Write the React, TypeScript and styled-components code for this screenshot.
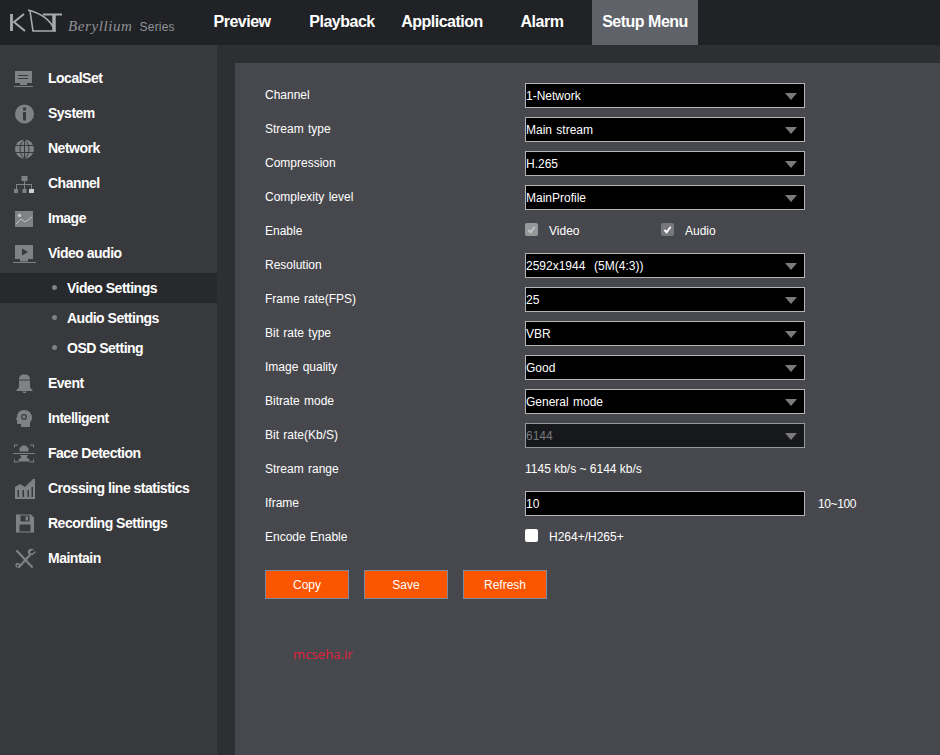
import React from 'react';
import styled, { createGlobalStyle } from 'styled-components';

const GlobalStyle = createGlobalStyle`
  html, body {
    margin: 0;
    height: 100%;
    overflow: hidden;
    background: #2e2f33;
    font-family: 'Liberation Sans', Arial, sans-serif;
  }
  * { box-sizing: border-box; }
`;

const Page = styled.div`
  width: 940px;
  height: 755px;
  display: flex;
  flex-direction: column;
  overflow: hidden;
`;

const Header = styled.header`
  height: 45px;
  flex: none;
  display: flex;
  background: #212226;
`;

const Logo = styled.div`
  width: 192px;
  padding: 8px 0 0 10px;
  display: flex;
  align-items: flex-start;
`;

const LogoScript = styled.span`
  margin: 10px 0 0 6px;
  font: italic 15px 'Liberation Serif', serif;
  letter-spacing: 0.6px;
  color: #8f9296;
  white-space: nowrap;
`;

const LogoSeries = styled.span`
  margin: 12px 0 0 7px;
  font-size: 12px;
  letter-spacing: 0.2px;
  color: #8f9296;
`;

const NavItem = styled.div<{ $active?: boolean }>`
  width: ${({ $active }) => ($active ? 106 : 100)}px;
  display: flex;
  align-items: center;
  justify-content: center;
  padding-bottom: 2px;
  font-size: 16px;
  font-weight: bold;
  letter-spacing: -0.5px;
  color: #fff;
  background: ${({ $active }) => ($active ? '#5f6369' : 'transparent')};
`;

const Body = styled.div`
  flex: 1;
  display: flex;
  min-height: 0;
`;

const Sidebar = styled.nav`
  width: 217px;
  flex: none;
  padding-top: 15px;
  background: #38393d;
`;

const MenuRow = styled.div`
  height: 35px;
  display: flex;
  align-items: center;
  padding-left: 13px;
  font-size: 14px;
  font-weight: bold;
  letter-spacing: -0.5px;
  color: #fff;
`;

const MenuIcon = styled.svg`
  width: 24px;
  height: 24px;
  flex: none;
  margin-right: 11px;
  fill: #808184;
`;

const SubList = styled.div`
  margin: 3px 0 2px;
`;

const SubRow = styled.div<{ $active?: boolean }>`
  height: 30px;
  display: flex;
  align-items: center;
  padding: 0 0 1px 52px;
  font-size: 14px;
  font-weight: bold;
  letter-spacing: -0.5px;
  color: #fff;
  background: ${({ $active }) => ($active ? '#28292d' : 'transparent')};
`;

const SubDot = styled.span`
  width: 5px;
  height: 5px;
  margin-right: 10px;
  border-radius: 50%;
  background: #808184;
`;

const Content = styled.main`
  flex: 1;
  margin: 18px 0 0 18px;
  padding: 16px 0 0 30px;
  background: #47484d;
`;

const FormRow = styled.div`
  height: 34px;
  display: flex;
  align-items: center;
  font-size: 12px;
  word-spacing: 1px;
  color: #fff;
`;

const Label = styled.div`
  width: 260px;
  flex: none;
  padding-bottom: 3px;
`;

const Select = styled.div<{ $disabled?: boolean }>`
  width: 280px;
  height: 25px;
  margin-bottom: 1px;
  display: flex;
  align-items: center;
  justify-content: space-between;
  padding: 0 7px 0 0;
  border: 1px solid ${({ $disabled }) => ($disabled ? '#98999b' : '#b4b4b4')};
  background: ${({ $disabled }) => ($disabled ? '#17181b' : '#000')};
  color: ${({ $disabled }) => ($disabled ? '#77787c' : '#fff')};
`;

const Arrow = styled.span`
  width: 0;
  height: 0;
  margin-top: 1px;
  border-left: 6px solid transparent;
  border-right: 6px solid transparent;
  border-top: 7px solid #7a7a7a;
`;

const TextInput = styled.div`
  width: 280px;
  height: 25px;
  margin-bottom: 1px;
  display: flex;
  align-items: center;
  border: 1px solid #b4b4b4;
  background: #000;
`;

const Hint = styled.span`
  margin-left: 13px;
  letter-spacing: -0.4px;
`;

const RangeText = styled.span`
  padding-bottom: 2px;
  word-spacing: 0;
`;

const CheckGroup = styled.div<{ $width?: number }>`
  width: ${({ $width }) => ($width ? `${$width}px` : 'auto')};
  padding-bottom: 2px;
  display: flex;
  align-items: center;
`;

const CheckBox = styled.span<{ $tone: 'dim' | 'on' | 'off' }>`
  width: 13px;
  height: 13px;
  flex: none;
  margin: -3px 11px 0 0;
  display: flex;
  align-items: center;
  justify-content: center;
  border-radius: 2px;
  background: ${({ $tone }) =>
    $tone === 'dim' ? '#97989a' : $tone === 'on' ? '#77787b' : '#fff'};
  svg {
    width: 11px;
    height: 11px;
    stroke: ${({ $tone }) => ($tone === 'dim' ? '#c4c5c6' : '#fff')};
  }
`;

const Buttons = styled.div`
  display: flex;
  gap: 15px;
  margin-top: 15px;
`;

const Button = styled.button`
  width: 84px;
  height: 29px;
  padding: 0;
  border: 1px solid #7d8ba0;
  background: #fb5500;
  color: #fff;
  font: 12px 'Liberation Sans', Arial, sans-serif;
`;

const Watermark = styled.div`
  margin: 46px 0 0 28px;
  font: 13px 'Open Sans', sans-serif;
  letter-spacing: 0.1px;
  color: #e0203a;
`;

const icons: Record<string, React.ReactNode> = {
  local: (
    <g transform="translate(0 2)">
      <path fillRule="evenodd" d="M2 3h17v12H2zM5 7h10v1H5zM5 10h10v1H5z" />
      <path d="M7 15h7v2H7zM1 18h19v1H1z" />
    </g>
  ),
  system: (
    <path
      transform="translate(0 1.500)"
      fillRule="evenodd"
      d="M11.500 2a9.500 9.500 0 1 0 0 19 9.500 9.500 0 0 0 0-19zM10 5h3v3h-3zM10 9.500h3V18h-3z"
    />
  ),
  network: (
    <g transform="translate(0 1.500)">
      <circle cx="11.500" cy="11.500" r="9.500" />
      <path
        d="M2 8h19M2 15h19M11.500 2v19M11.500 2c-6 5-6 14 0 19M11.500 2c6 5 6 14 0 19"
        fill="none"
        stroke="#38393d"
        strokeWidth="1"
      />
    </g>
  ),
  channel: (
    <g transform="translate(0 3)">
      <path d="M8.500 2h6v5h-6zM1 15h4v4H1zM9.500 15h4v4h-4z" />
      <path d="M16 15h5v4h-5z" fill="#cfcfd0" />
      <path d="M11 7h1v3h7v5h-1v-4h-6v4h-1v-4H4v4H3v-5h8z" />
    </g>
  ),
  image: (
    <g transform="translate(0 3)">
      <path fillRule="evenodd" d="M2 2h18v16H2z" />
      <circle cx="6.500" cy="6.500" r="1.800" fill="#c4c4c5" />
      <path d="M3 15l5-5 4 3 7-5" fill="none" stroke="#c4c4c5" strokeWidth="1" />
    </g>
  ),
  video: (
    <g transform="translate(0 3)">
      <path fillRule="evenodd" d="M2 1h18v14H2zM9 4.500v7l6-3.500z" />
      <path d="M7 15h8v2.500H7zM0 18h23v1H0z" />
    </g>
  ),
  event: (
    <path
      transform="translate(0 1.500)"
      d="M11.500 2c4 0 5.500 2 5.500 5H6c0-3 1.500-5 5.500-5zM6 8h11v6c0 1.500 1.500 2.500 2.500 3.500v1h-16v-1C4.500 16.500 6 15.500 6 14zM9.500 19h4c0 1.500-1 1.500-2 1.500s-2 0-2-1.500z"
    />
  ),
  intelligent: (
    <g>
      <path d="M11 4c4.500 0 8 3 8 7.500 0 2.500-1.500 4-2 5.500v4H8v-3H5.500c-1 0-1.500-.5-1.500-1.500V14l-1-1 1-2C4 7 7 4 11 4z" />
      <circle cx="11" cy="11" r="2.300" fill="none" stroke="#38393d" strokeWidth="1.200" />
    </g>
  ),
  face: (
    <g transform="translate(0 1.500)">
      <path d="M1 2h4v1H2v2H1zM17 2h4v3h-1V3h-3zM1 17h1v2h3v1H1zM20 17h1v3h-4v-1h3z" />
      <path d="M11 3a4.500 4.500 0 0 1 4.500 4.500V9h-9V7.500A4.500 4.500 0 0 1 11 3zM0 10.500h22v1H0zM7 12.500h8c-.3 1-1 2-2 2.500 2.500.3 3.500 2 4 4H5c.5-2 1.500-3.700 4-4-1-.5-1.700-1.500-2-2.500z" />
    </g>
  ),
  crossing: (
    <path
      transform="translate(0 1)"
      fillRule="evenodd"
      d="M2 10l5-3 5 3 8-8h2v20H2zM4.500 13v7H6v-7zM9.500 13v7H11v-7zM14.500 13v7H16v-7zM18.500 10v10H20V10z"
    />
  ),
  recording: (
    <path
      transform="translate(0 1.500)"
      fillRule="evenodd"
      d="M3 2h15l3 3v15H3zM7.500 3v6h9V3zM12.500 4h2.500v4h-2.500zM6.500 12v7h11v-7z"
    />
  ),
  maintain: (
    <g fill="none" stroke="#808184" strokeLinecap="round">
      <path d="M4 5l15 16" strokeWidth="2.200" />
      <path d="M6 21L17 9" strokeWidth="2.200" />
      <path d="M22 6l-3 2.500-2.500-1L16.500 5 19 3.500c-2-.5-4 1-3.500 3.500" strokeWidth="1.500" />
      <path d="M4 21c-1.500-1-1-3 .5-3.500L7 19" strokeWidth="1.500" />
    </g>
  ),
};

const Check = () => (
  <svg viewBox="0 0 12 12" fill="none" strokeWidth="2">
    <path d="M2.500 6.500l2.500 2.500 4.500-6" />
  </svg>
);

const MenuEntry = ({ icon, label }: { icon: string; label: string }) => (
  <MenuRow>
    <MenuIcon viewBox="0 0 24 24">{icons[icon]}</MenuIcon>
    {label}
  </MenuRow>
);

const Field = ({ label, value }: { label: string; value: string }) => (
  <FormRow>
    <Label>{label}</Label>
    <Select>
      {value}
      <Arrow />
    </Select>
  </FormRow>
);

const App = () => {
  return (
    <Page>
      <GlobalStyle />
      <Header>
        <Logo>
          <svg width="52" height="24" viewBox="0 0 52 24" fill="none" stroke="#a7abae" strokeWidth="1.600">
            <path d="M1.500 6v17" strokeWidth="2.800" />
            <path d="M14 6L4 14l11 9" strokeWidth="2" />
            <path d="M18 2c12 3 23 10 27 21H23L20 3" />
            <path d="M33 6.500h19" strokeWidth="2" />
            <path d="M44 6.500V23" strokeWidth="3.500" />
          </svg>
          <LogoScript>Beryllium</LogoScript>
          <LogoSeries>Series</LogoSeries>
        </Logo>
        <NavItem>Preview</NavItem>
        <NavItem>Playback</NavItem>
        <NavItem>Application</NavItem>
        <NavItem>Alarm</NavItem>
        <NavItem $active>Setup Menu</NavItem>
      </Header>
      <Body>
        <Sidebar>
          <MenuEntry icon="local" label="LocalSet" />
          <MenuEntry icon="system" label="System" />
          <MenuEntry icon="network" label="Network" />
          <MenuEntry icon="channel" label="Channel" />
          <MenuEntry icon="image" label="Image" />
          <MenuEntry icon="video" label="Video audio" />
          <SubList>
            <SubRow $active>
              <SubDot />
              Video Settings
            </SubRow>
            <SubRow>
              <SubDot />
              Audio Settings
            </SubRow>
            <SubRow>
              <SubDot />
              OSD Setting
            </SubRow>
          </SubList>
          <MenuEntry icon="event" label="Event" />
          <MenuEntry icon="intelligent" label="Intelligent" />
          <MenuEntry icon="face" label="Face Detection" />
          <MenuEntry icon="crossing" label="Crossing line statistics" />
          <MenuEntry icon="recording" label="Recording Settings" />
          <MenuEntry icon="maintain" label="Maintain" />
        </Sidebar>
        <Content>
          <Field label="Channel" value="1-Network" />
          <Field label="Stream type" value="Main stream" />
          <Field label="Compression" value="H.265" />
          <Field label="Complexity level" value="MainProfile" />
          <FormRow>
            <Label>Enable</Label>
            <CheckGroup $width={136}>
              <CheckBox $tone="dim">
                <Check />
              </CheckBox>
              Video
            </CheckGroup>
            <CheckGroup>
              <CheckBox $tone="on">
                <Check />
              </CheckBox>
              Audio
            </CheckGroup>
          </FormRow>
          <Field label="Resolution" value={'2592x1944\u00a0 (5M(4:3))'} />
          <Field label="Frame rate(FPS)" value="25" />
          <Field label="Bit rate type" value="VBR" />
          <Field label="Image quality" value="Good" />
          <Field label="Bitrate mode" value="General mode" />
          <FormRow>
            <Label>Bit rate(Kb/S)</Label>
            <Select $disabled>
              6144
              <Arrow />
            </Select>
          </FormRow>
          <FormRow>
            <Label>Stream range</Label>
            <RangeText>1145 kb/s ~ 6144 kb/s</RangeText>
          </FormRow>
          <FormRow>
            <Label>Iframe</Label>
            <TextInput>10</TextInput>
            <Hint>10~100</Hint>
          </FormRow>
          <FormRow>
            <Label>Encode Enable</Label>
            <CheckGroup>
              <CheckBox $tone="off" />
              H264+/H265+
            </CheckGroup>
          </FormRow>
          <Buttons>
            <Button>Copy</Button>
            <Button>Save</Button>
            <Button>Refresh</Button>
          </Buttons>
          <Watermark>mcseha.ir</Watermark>
        </Content>
      </Body>
    </Page>
  );
};

export default App;
